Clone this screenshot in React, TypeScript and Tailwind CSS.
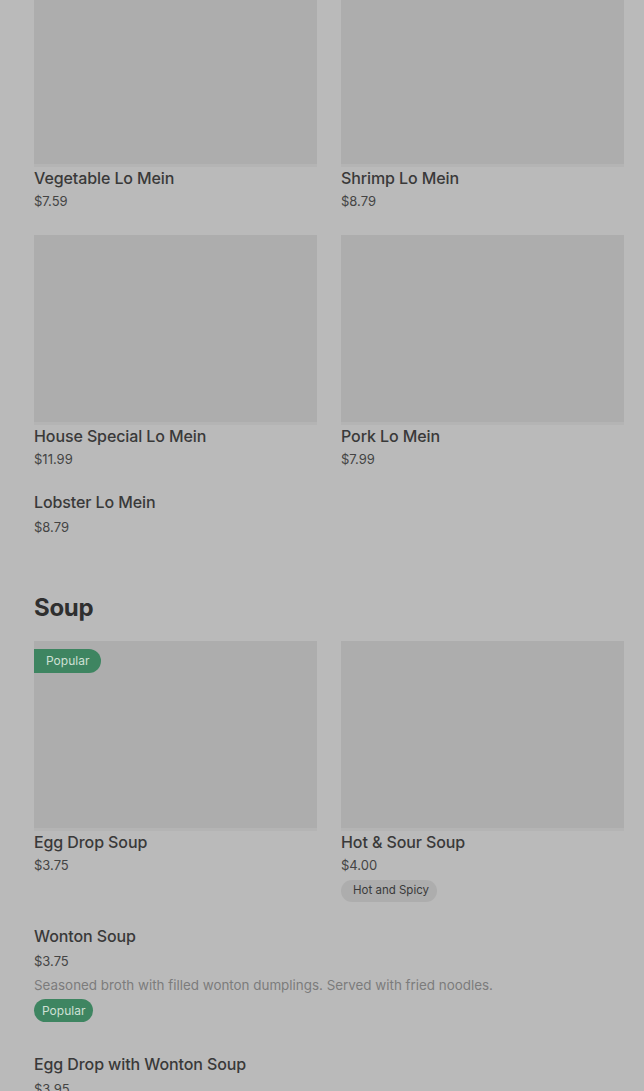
import React from "react";

type Item = {
  name: string;
  price: string;
  desc?: string;
  badge?: "popular" | "spicy";
  popularOnImage?: boolean;
};

const loMein: Item[] = [
  { name: "Vegetable Lo Mein", price: "$7.59" },
  { name: "Shrimp Lo Mein", price: "$8.79" },
  { name: "House Special Lo Mein", price: "$11.99" },
  { name: "Pork Lo Mein", price: "$7.99" },
];

const soupGrid: Item[] = [
  { name: "Egg Drop Soup", price: "$3.75", popularOnImage: true },
  { name: "Hot & Sour Soup", price: "$4.00", badge: "spicy" },
];

const soupList: Item[] = [
  {
    name: "Wonton Soup",
    price: "$3.75",
    desc: "Seasoned broth with filled wonton dumplings. Served with fried noodles.",
    badge: "popular",
  },
  { name: "Egg Drop with Wonton Soup", price: "$3.95" },
];

const Badge = ({ kind }: { kind: "popular" | "spicy" }) =>
  kind === "popular" ? (
    <span className="self-start mt-[5px] rounded-full bg-[#3e8561] px-2 h-[23px] flex items-center text-[12px] text-[#cfe0d5]">
      Popular
    </span>
  ) : (
    <span className="self-start mt-[6px] rounded-full bg-[#adadad] pl-3 pr-2 h-[22px] flex items-center text-[11.5px] text-[#3a3a3a]">
      Hot and Spicy
    </span>
  );

const GridCard = ({ item }: { item: Item }) => (
  <div className="flex flex-col">
    <div className="relative h-[190px] bg-[#adadad] border-b-[3px] border-[#b4b4b4]">
      {item.popularOnImage && (
        <span className="absolute top-2 left-0 h-[24px] flex items-center rounded-r-full bg-[#3e8561] pl-3 pr-3 text-[12px] text-[#cfe0d5]">
          Popular
        </span>
      )}
    </div>
    <p className="mt-[1px] text-[16px] leading-5 font-medium tracking-[-0.1px] text-[#393939]">
      {item.name}
    </p>
    <p className="mt-[4px] text-[13px] leading-[18px] text-[#444]">
      {item.price}
    </p>
    {item.badge && <Badge kind={item.badge} />}
  </div>
);

const ListItem = ({ item }: { item: Item }) => (
  <div className="flex flex-col">
    <p className="text-[16px] leading-5 font-medium tracking-[-0.1px] text-[#393939]">
      {item.name}
    </p>
    <p className="mt-[6px] text-[13px] leading-[18px] text-[#444]">
      {item.price}
    </p>
    {item.desc && (
      <p className="mt-[6px] text-[13.4px] leading-[18px] text-[#7c7c7c]">
        {item.desc}
      </p>
    )}
    {item.badge && <Badge kind={item.badge} />}
  </div>
);

const App = () => {
  return (
    <div
      className="min-h-screen bg-[#bababa] pl-[34px] pr-[20px] overflow-hidden"
      style={{ fontFamily: "Inter, 'Noto Sans', sans-serif" }}
    >
      <div className="-mt-[23px] flex flex-col">
        {/* LO MEIN */}
        <div className="grid grid-cols-2 gap-x-6 gap-y-[25px]">
          {loMein.map((it) => (
            <GridCard key={it.name} item={it} />
          ))}
        </div>
        <div className="mt-[24px]">
          <ListItem item={{ name: "Lobster Lo Mein", price: "$8.79" }} />
        </div>

        {/* SOUP */}
        <h2 className="mt-[56px] text-[24px] leading-8 font-bold tracking-[-0.3px] text-[#2f2f2f]">
          Soup
        </h2>
        <div className="mt-[17px] grid grid-cols-2 gap-x-6 gap-y-[25px]">
          {soupGrid.map((it) => (
            <GridCard key={it.name} item={it} />
          ))}
        </div>
        <div className="mt-[24px] flex flex-col gap-[32px]">
          {soupList.map((it) => (
            <ListItem key={it.name} item={it} />
          ))}
        </div>
      </div>
    </div>
  );
};

export default App;
